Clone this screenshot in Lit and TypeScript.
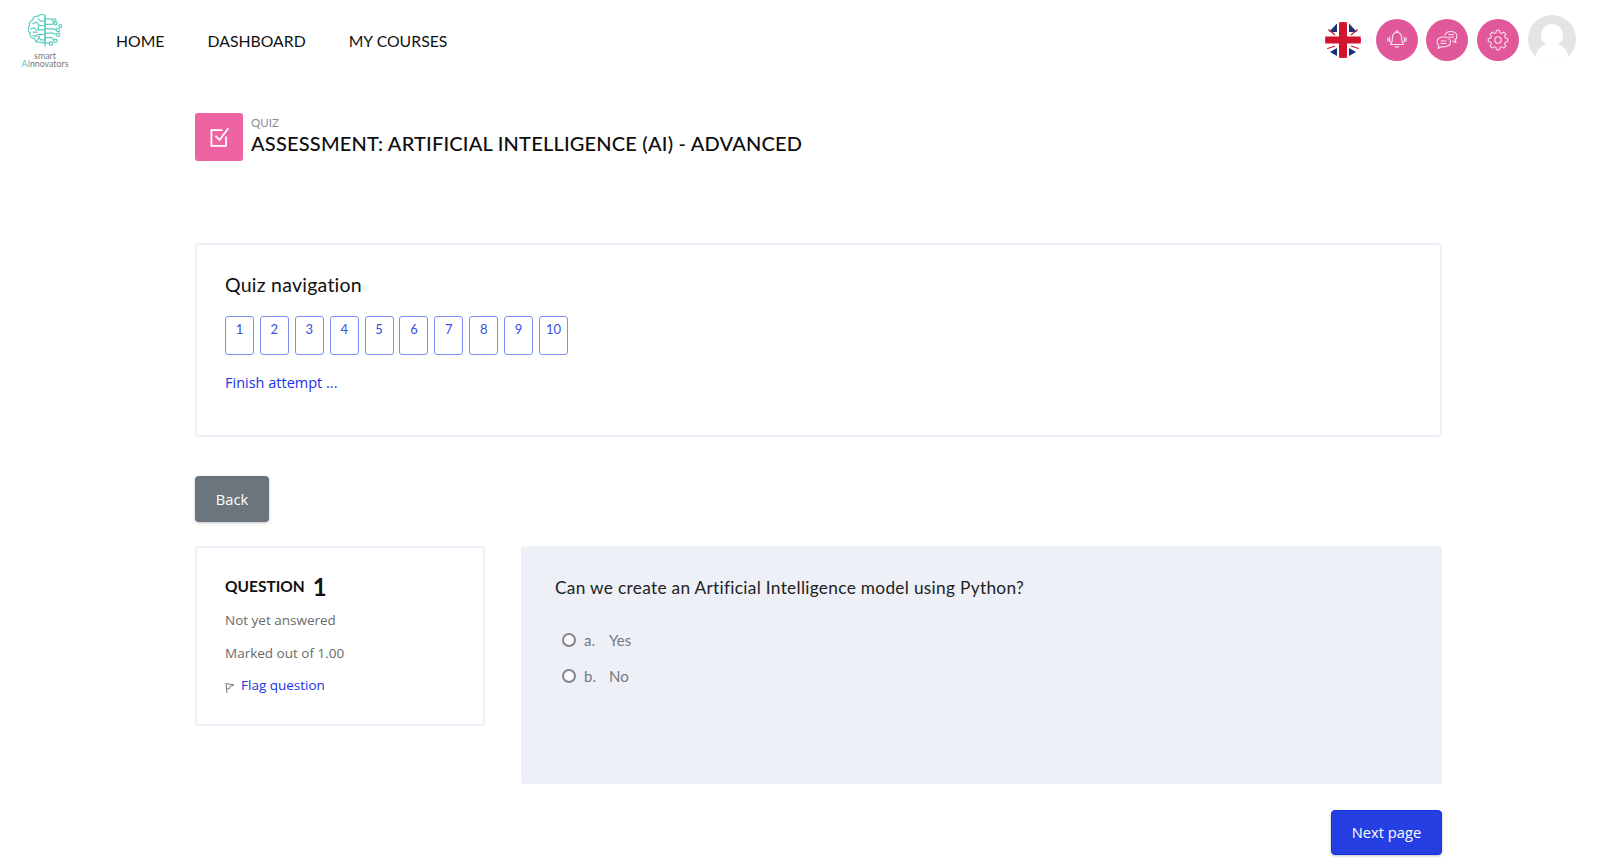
import { LitElement, html, css, svg } from "lit";
import { customElement } from "lit/decorators.js";

const brain = svg`<g fill="none" stroke="#5ccdbf" stroke-width="1.100" stroke-linecap="round" stroke-linejoin="round">
<path d="M18 3c-2-1.500-5-1.500-6 .5-3-.5-5 1.500-5 3.500-2.500 .5-4 3-3 5.500-2 1.500-2 5 .5 6.500-.5 3 1.500 5 4 5 .5 2.500 3 4 5 3 1.500 1 3.500 1 4.500 0z"/>
<path d="M18 3v28M18 8h-4l-2-2M18 12h-5l-3-3-3 1M18 16h-8l-2-2-3 1M18 20h-6l-3 2-2-1M18 25h-4l-2-3M12 12v3M10 27l3-5M7 18h4"/>
<path d="M18 6h5l2 1M18 11h6l2-1M18 15h8l2 1M18 19h7l3 1M18 23h6l2 2M18 28h4"/>
<circle cx="26.500" cy="7.500" r="1.500"/><circle cx="27.500" cy="10" r="1.500"/><circle cx="29.800" cy="16" r="1.500"/><circle cx="30" cy="20.500" r="1.500"/><circle cx="27.500" cy="26" r="1.500"/><circle cx="23.500" cy="28.500" r="1.500"/><circle cx="32" cy="12.500" r="1.300"/>
</g>`;

@customElement("app-root")
export class AppRoot extends LitElement {
  static styles = css`
    :host { display: block; width: 1600px; height: 868px; overflow: hidden; background: #fff; font-family: "Open Sans", sans-serif; color: #6a6a6a; }
    * { box-sizing: border-box; }
    .top { display: flex; align-items: flex-start; height: 113px; padding-left: 21px; padding-right: 24px; }
    .logo { width: 48px; margin-top: 14px; display: flex; flex-direction: column; align-items: center; }
    .logo svg { display: block; width: 34px; height: 34px; margin-bottom: 4px; }
    .logo span { font: 8.800px/8px "Lato", sans-serif; color: #777; white-space: nowrap; text-align: center; }
    .logo b { font-weight: 400; color: #4fc4b6; }
    .nav { display: flex; gap: 43px; margin-left: 47px; margin-top: 31px; font: 15.800px/20px "Lato", sans-serif; color: #111; }
    .right { margin-left: auto; display: flex; align-items: flex-start; margin-top: 15px; }
    .flag { width: 36px; height: 36px; margin-top: 7px; margin-right: 15px; border-radius: 50%; overflow: hidden; display: block; }
    .circle { width: 42px; height: 42px; border-radius: 50%; background: #e0589a; margin-top: 4px; margin-right: 8.500px; display: flex; align-items: center; justify-content: center; }
    .circle svg { width: 24px; height: 24px; fill: none; stroke: #fbe3ef; stroke-width: 1.100; stroke-linecap: round; stroke-linejoin: round; }
    .avatar { width: 48px; height: 48px; display: block; margin-left: 1px; }
    main { margin-left: 195px; width: 1247px; }
    .head { display: flex; gap: 8px; height: 130px; }
    .tile { width: 48px; height: 48px; border-radius: 3px; background: #ee64a2; display: flex; align-items: center; justify-content: center; }
    .tile svg { width: 28px; height: 28px; fill: none; stroke: #fff; stroke-width: 1.500; }
    .eyebrow { font: 11.500px/14px "Lato", sans-serif; color: #8a8d93; margin-top: 3px; }
    h1 { margin: 0; font: 500 20px/27px "Lato", sans-serif; color: #0e0e0e; letter-spacing: .2px; white-space: nowrap; }
    .card { border: 2px solid #eceff8; border-radius: 4px; background: #fff; }
    .quiznav { height: 194px; padding: 26px 28px 0; }
    h2 { margin: 0; font: 400 19.500px/28px "Lato", sans-serif; color: #111; letter-spacing: .25px; }
    .nums { display: flex; gap: 5.900px; margin-top: 17px; }
    .num { width: 29px; height: 39px; border: 1px solid #7f8df5; border-radius: 3px; color: #3a4fe0; font: 13px/25px "Lato", sans-serif; text-align: center; }
    a { color: #1b33e6; text-decoration: none; }
    .finish { display: block; margin-top: 18px; font-size: 14.500px; line-height: 20px; }
    .btn { display: flex; align-items: center; justify-content: center; border-radius: 4px; color: #fff; font-size: 14.700px; padding-bottom: 1px; box-shadow: 0 1px 3px rgba(0,0,0,.25); }
    .back { width: 74px; height: 46px; margin-top: 39px; background: #6c757d; }
    .row { display: flex; justify-content: space-between; align-items: flex-start; margin-top: 24px; }
    .info { width: 290px; height: 180px; padding: 24px 28px 0; font-size: 13.500px; }
    .qh { display: flex; align-items: center; gap: 8px; height: 29px; font: 700 15.500px/29px "Lato", sans-serif; color: #111; }
    .qh span { font: 700 24px/29px "Lato", sans-serif; }
    .info p { margin: 10px 0 0; line-height: 18px; }
    .info p + p { margin-top: 15px; }
    .flagq { display: flex; align-items: center; gap: 6px; margin-top: 14px; line-height: 18px; }
    .flagq svg { width: 10px; height: 12px; margin-top: 5px; fill: none; stroke: #777; stroke-width: 1; }
    .panel { width: 921px; height: 238px; background: #edf0f7; border-radius: 3px; padding: 29px 34px 0; }
    .q { font: 400 17.300px/26px "Lato", sans-serif; color: #222; letter-spacing: .3px; }
    .opts { margin-top: 29px; display: flex; flex-direction: column; gap: 16px; margin-left: 7px; font: 400 15px/20px "Lato", sans-serif; color: #77777f; }
    .opt { display: flex; align-items: center; }
    .radio { width: 14px; height: 14px; border: 2px solid #85858f; border-radius: 50%; background: #fbfbfd; margin-right: 8px; }
    .let { width: 25px; }
    .foot { display: flex; justify-content: flex-end; margin-top: 26px; }
    .next { width: 111px; height: 45px; background: #263fe3; border: 1px solid #1730e0; }
  `;

  render() {
    return html`
      <div class="top">
        <div class="logo">
          <svg viewBox="2.500 1.500 31 31">${brain}</svg>
          <span>smart<br /><b>AI</b>nnovators</span>
        </div>
        <nav class="nav"><span>HOME</span><span>DASHBOARD</span><span>MY COURSES</span></nav>
        <div class="right">
          <svg class="flag" viewBox="0 0 36 36">
            <rect width="36" height="36" fill="#fff" />
            <path d="M4 10h8V1.500zM32 10h-8V1.500zM12 26v8l-7-4zM24 26v8l7-4z" fill="#1c2f7c" />
            <path d="M1 27l9-3M35 27l-9-3M3 7l7 6M33 7l-7 6" stroke="#cf1a33" stroke-width="1.300" />
            <path d="M14 0h8v36h-8zM0 14.500h36v7H0z" fill="#d2142e" />
          </svg>
          <div class="circle">
            <svg viewBox="0 0 24 24"><path d="M12 4.500c-3 0-4.500 2-4.500 5 0 3.500-.8 5.500-2 7h13c-1.200-1.500-2-3.500-2-7 0-3-1.500-5-4.500-5zM11 4.500V3h2v1.500M10.300 18.500c.5 1 2.900 1 3.400 0M5 9c-.9 1.500-.9 3.500 0 5M19 9c.9 1.500.9 3.500 0 5M3 10c-.4 1-.4 2 0 3M21 10c.4 1 .4 2 0 3" /></svg>
          </div>
          <div class="circle">
            <svg viewBox="0 0 24 24"><path d="M8.500 9C4.500 9 2 11 2 14c0 1.500.7 2.700 1.800 3.500L3 20.500l3.500-1.800c3 .6 9-.2 9-4.700C15.500 11 12.500 9 8.500 9zM10 7c.6-2 2.700-3.500 5.500-3.500 3.700 0 6.500 1.900 6.500 4.700 0 1.600-.8 2.800-2 3.600l1 2.700-3.500-1.500M6 13h5M6 15.500h5M13.500 6.500h5M14 9h4.500" /></svg>
          </div>
          <div class="circle">
            <svg viewBox="0 0 24 24"><circle cx="12" cy="12" r="3.200" /><path d="M10.300 2.500h3.400l.5 2.700 1.800.8 2.300-1.600 2.400 2.400-1.600 2.300.8 1.800 2.700.5v3.400l-2.700.5-.8 1.800 1.600 2.300-2.400 2.400-2.300-1.600-1.800.8-.5 2.700h-3.400l-.5-2.700-1.800-.8-2.300 1.600-2.400-2.400 1.600-2.300-.8-1.800-2.700-.5v-3.400l2.700-.5.8-1.800-1.600-2.300 2.400-2.400 2.300 1.600 1.800-.8z" transform="translate(12 12) scale(.92) translate(-12 -13)" /></svg>
          </div>
          <svg class="avatar" viewBox="0 0 48 48">
            <defs><clipPath id="av"><circle cx="24" cy="24" r="24" /></clipPath></defs>
            <circle cx="24" cy="24" r="24" fill="#e4e4e4" />
            <g clip-path="url(#av)" fill="#fff"><circle cx="24" cy="20" r="11" /><ellipse cx="24" cy="45" rx="17" ry="17" /></g>
          </svg>
        </div>
      </div>
      <main>
        <div class="head">
          <div class="tile">
            <svg viewBox="0 0 24 24"><path d="M18 11.500V19.500H5.500V6H15" /><path d="M9 11l3.500 3.500L20 4.500" /></svg>
          </div>
          <div>
            <div class="eyebrow">QUIZ</div>
            <h1>ASSESSMENT: ARTIFICIAL INTELLIGENCE (AI) - ADVANCED</h1>
          </div>
        </div>
        <section class="card quiznav">
          <h2>Quiz navigation</h2>
          <div class="nums">
            ${[1, 2, 3, 4, 5, 6, 7, 8, 9, 10].map((n) => html`<div class="num">${n}</div>`)}
          </div>
          <a class="finish" href="#">Finish attempt ...</a>
        </section>
        <div class="btn back">Back</div>
        <div class="row">
          <section class="card info">
            <div class="qh">QUESTION <span>1</span></div>
            <p>Not yet answered</p>
            <p>Marked out of 1.00</p>
            <div class="flagq">
              <svg viewBox="0 0 10 12"><path d="M2 11L1 1.500 9 3 5 4.500 4.500 6.500 1.500 7" /></svg>
              <a href="#">Flag question</a>
            </div>
          </section>
          <section class="panel">
            <div class="q">Can we create an Artificial Intelligence model using Python?</div>
            <div class="opts">
              <div class="opt"><span class="radio"></span><span class="let">a.</span><span>Yes</span></div>
              <div class="opt"><span class="radio"></span><span class="let">b.</span><span>No</span></div>
            </div>
          </section>
        </div>
        <div class="foot"><div class="btn next">Next page</div></div>
      </main>
    `;
  }
}
